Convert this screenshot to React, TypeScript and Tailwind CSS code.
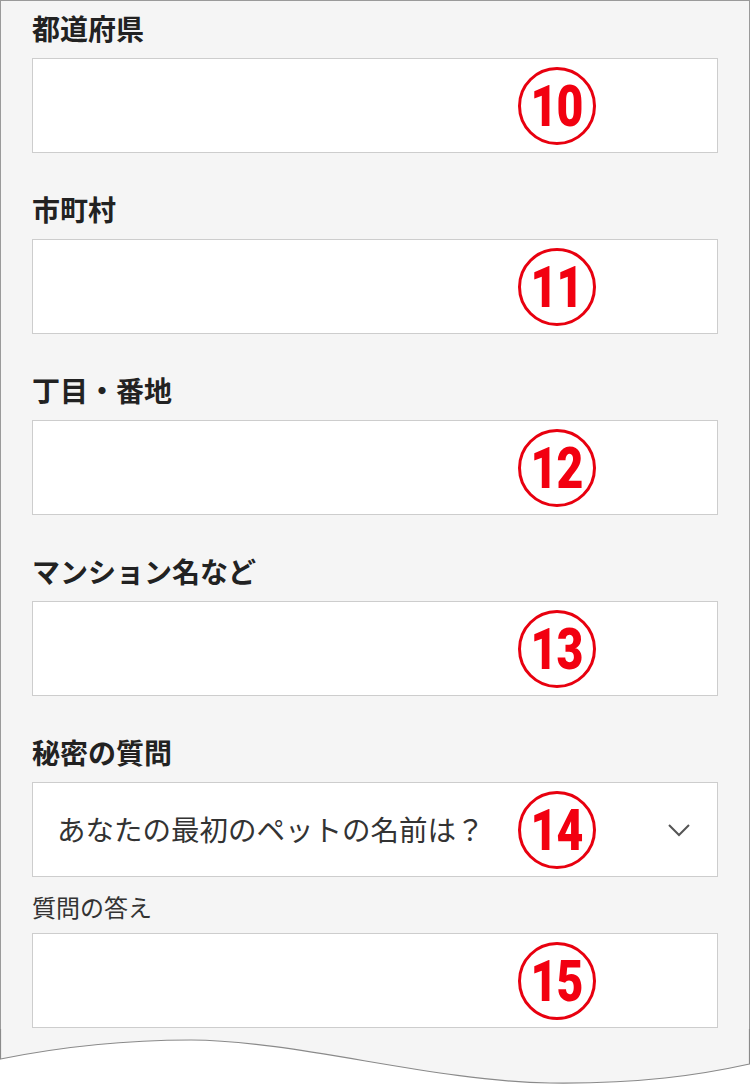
import React from "react";

const jp = { fontFamily: '"Noto Sans CJK JP", "Noto Sans", sans-serif' };

function Badge({ n }: { n: string }) {
  return (
    <div className="pointer-events-none absolute left-[485px] top-1/2 flex h-[78px] w-[78px] -translate-y-1/2 items-center justify-center rounded-full border-[3px] border-[#e8000f]">
      <span
        className="inline-block scale-x-[0.8] text-[58px] font-black leading-none tracking-[-1px] text-[#f20010]"
        style={{ fontFamily: "Roboto, 'Liberation Sans', sans-serif" }}
      >
        {n}
      </span>
    </div>
  );
}

function Field({ label, n, first }: { label: string; n: string; first?: boolean }) {
  return (
    <div className={first ? "" : "mt-[41px]"}>
      <div className="text-[28px] font-bold leading-[30px] text-[#222]">{label}</div>
      <div className="relative mt-[15px] h-[95px] border border-[#cdcdcd] bg-white">
        <Badge n={n} />
      </div>
    </div>
  );
}

export default function App() {
  return (
    <div className="h-[1084px] w-[750px] overflow-hidden bg-white" style={jp}>
      <div className="border-x border-t border-[#9a9a9a] bg-[#f5f5f5] px-[31px] pt-[12px]">
        <Field label="都道府県" n="10" first />
        <Field label="市町村" n="11" />
        <Field label="丁目・番地" n="12" />
        <Field label="マンション名など" n="13" />

        <div className="mt-[41px]">
          <div className="text-[28px] font-bold leading-[30px] text-[#222]">秘密の質問</div>
          <div className="relative mt-[15px] flex h-[95px] items-center border border-[#cdcdcd] bg-white pl-[24px]">
            <span className="text-[28.5px] leading-none text-[#333]">あなたの最初のペットの名前は？</span>
            <svg className="absolute left-[634px] top-[39px]" width="24" height="16" viewBox="0 0 24 16">
              <polyline points="2,3 12,13 22,3" fill="none" stroke="#555" strokeWidth="2" />
            </svg>
            <Badge n="14" />
          </div>
        </div>

        <div className="mt-[15px] text-[24px] leading-[30px] text-[#333]">質問の答え</div>
        <div className="relative mt-[11px] h-[95px] border border-[#cdcdcd] bg-white">
          <Badge n="15" />
        </div>
        <div className="h-[1px]" />
      </div>
      <svg width="750" height="56" viewBox="0 0 750 56" className="block">
        <path
          d="M0,0 L0,30 C60,18 130,11 191,11 C300,12 430,52 550,54 C640,55 700,46 750,35 L750,0 Z"
          fill="#f5f5f5"
        />
        <path
          d="M0.5,0 L0.5,30 C60,18 130,11 191,11 C300,12 430,52 550,54 C640,55 700,46 749.5,35 L749.5,0"
          fill="none"
          stroke="#8a8a8a"
          strokeWidth="1.2"
        />
      </svg>
    </div>
  );
}
